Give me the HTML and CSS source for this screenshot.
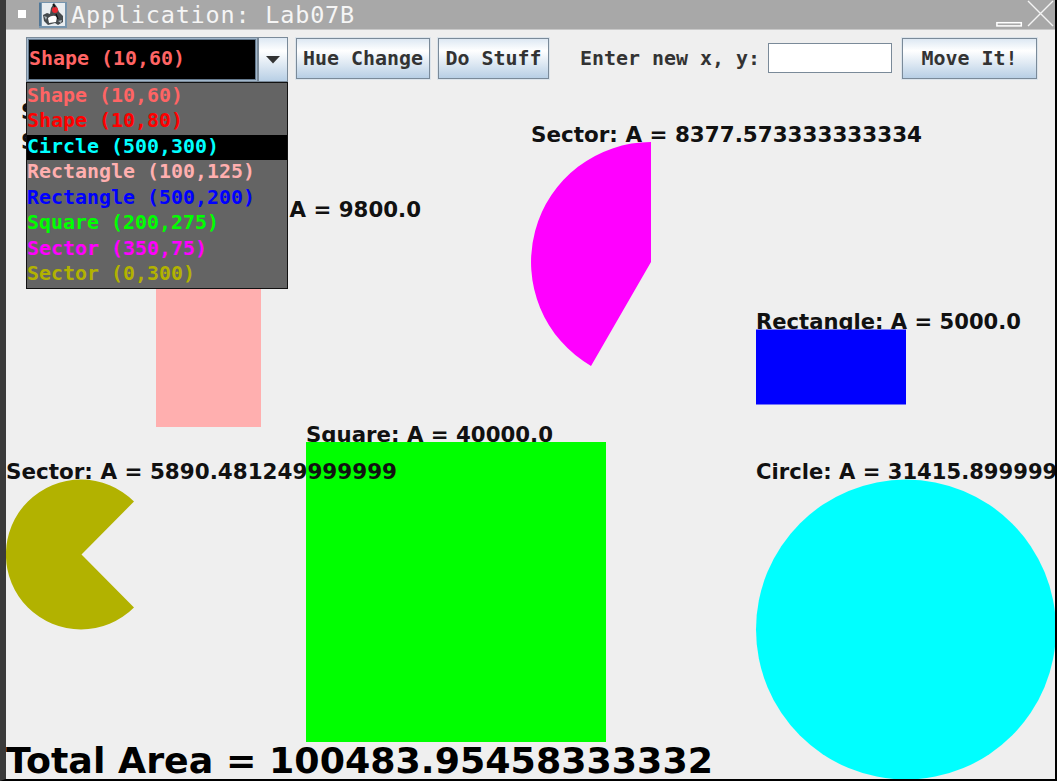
FILE: index.html
```html
<!DOCTYPE html>
<html lang="en">
<head>
<meta charset="utf-8">
<title>Application: Lab07B</title>
<link rel="stylesheet" href="styles.css">
</head>
<body>
<div class="window">
  <header class="titlebar">
    <span class="menu-dot"></span>
    <svg class="app-icon" viewBox="0 0 28 26">
      <rect width="28" height="26" fill="#7795ae"/>
      <rect x="0" y="1" width="2" height="23" fill="#527796"/>
      <rect x="3" y="1" width="23" height="23" fill="#e9edf0"/>
      <path d="M4 13l4-2 3 1 1-6 3-5 3 4 2 5 4 4 0 6-5 3-3-2-7 2-4-4z" fill="#454a4d"/>
      <path d="M9 16q5-4 9-1l-1 5-7 1z" fill="#fff"/>
      <path d="M5 14l3 1-1 3zM19 19l4-1-1 3z" fill="#aeb7bd"/>
      <circle cx="16" cy="8" r="3" fill="#e72a31"/>
      <path d="M14 2l2 3M17 12l2 5" stroke="#111" stroke-width="1.400"/>
    </svg>
    <h1 class="title">Application: Lab07B</h1>
    <svg class="window-controls" viewBox="0 0 60 29">
      <rect x=".9" y="22.700" width="24.400" height="3.200" fill="#a8a8a8" stroke="#fff" stroke-width="1.500"/>
      <path d="M32 1L57 26M57 1L32 26" stroke="#f4f4f4" stroke-width="1.400"/>
    </svg>
  </header>
  <main class="content">
    <svg class="canvas" viewBox="6 30 1049 749">
      <g class="label">
        <text x="21" y="119">S</text>
        <text x="21" y="149">S</text>
        <text x="289.500" y="216.500" textLength="131.500" lengthAdjust="spacingAndGlyphs">A = 9800.0</text>
        <text x="531" y="141.500" textLength="391" lengthAdjust="spacingAndGlyphs">Sector: A = 8377.573333333334</text>
        <text x="756" y="329" textLength="265" lengthAdjust="spacingAndGlyphs">Rectangle: A = 5000.0</text>
        <text x="306" y="441.500" textLength="247" lengthAdjust="spacingAndGlyphs">Square: A = 40000.0</text>
        <text x="756" y="479" textLength="316" lengthAdjust="spacingAndGlyphs">Circle: A = 31415.8999999</text>
      </g>
      <rect x="156" y="217" width="105" height="210" fill="#ffafaf"/>
      <path d="M651 262V142A120 120 0 0 0 591 365.900Z" fill="#f0f"/>
      <rect x="756" y="329.500" width="150" height="75" fill="#00f"/>
      <rect x="306" y="442" width="300" height="300" fill="#0f0"/>
      <path d="M81.500 554.500L134 501.500A75 75 0 1 0 134 607.500Z" fill="#b2b200"/>
      <circle cx="906" cy="629.500" r="150" fill="#0ff"/>
      <text class="label" x="6" y="479" textLength="391" lengthAdjust="spacingAndGlyphs">Sector: A = 5890.481249999999</text>
      <text class="total" x="6" y="773.300" textLength="707" lengthAdjust="spacingAndGlyphs">Total Area = 100483.95458333332</text>
    </svg>
    <div class="toolbar">
      <div class="combo">
        <div class="combo-value">Shape (10,60)</div>
        <div class="combo-arrow"><svg viewBox="0 0 14 8"><path d="M0 0H14L7 7.500Z" fill="#333"/></svg></div>
        <ul class="menu">
          <li class="salmon">Shape (10,60)</li>
          <li class="red">Shape (10,80)</li>
          <li class="cyan selected">Circle (500,300)</li>
          <li class="pink">Rectangle (100,125)</li>
          <li class="blue">Rectangle (500,200)</li>
          <li class="green">Square (200,275)</li>
          <li class="magenta">Sector (350,75)</li>
          <li class="olive">Sector (0,300)</li>
        </ul>
      </div>
      <button class="button hue">Hue Change</button>
      <button class="button stuff">Do Stuff</button>
      <label class="field-label" for="position">Enter new x, y:</label>
      <input class="field" id="position" type="text">
      <button class="button move">Move It!</button>
    </div>
  </main>
</div>
</body>
</html>
```
FILE: styles.css
```css
* { box-sizing: border-box; }
body { margin: 0; background: #000; overflow: hidden; }
.window {
  width: 1057px;
  height: 781px;
  border-left: 6px solid #3a3a3a;
  border-right: 2px solid #000;
  border-bottom: 2px solid #000;
  display: flex;
  flex-direction: column;
  background: #efefef;
  overflow: hidden;
}
.titlebar {
  height: 30px;
  flex: none;
  display: flex;
  background: #a8a8a8;
  border-bottom: 1px solid #c8c8c8;
}
.menu-dot { width: 8px; height: 8px; margin: 10px 0 0 12px; background: #fff; }
.app-icon { width: 28px; height: 26px; margin: 2px 0 0 13px; }
.title {
  margin: 0 0 0 4px;
  font: 23.5px/30px "DejaVu Sans Mono", monospace;
  letter-spacing: .8px;
  color: #f5f5f5;
}
.window-controls { width: 60px; height: 29px; margin-left: auto; margin-right: -1px; }
.content { position: relative; flex: 1; }
.canvas { position: absolute; inset: 0; width: 1049px; height: 749px; }
.label { font: bold 20.8px "DejaVu Sans", sans-serif; fill: #111; }
.total { font: bold 36px "DejaVu Sans", sans-serif; fill: #000; }
.toolbar {
  position: relative;
  display: flex;
  align-items: flex-start;
  padding: 7px 0 0 20px;
  font: bold 19.93px "DejaVu Sans Mono", monospace;
  color: #333;
  white-space: nowrap;
}
.combo {
  position: relative;
  display: flex;
  width: 262px;
  height: 45px;
  border: 1.5px solid #7a8a99;
  background: #a3b8cc;
}
.combo-value {
  flex: 1;
  margin: 1px;
  border: 1px solid #63788c;
  background: #000;
  color: #ff6464;
  line-height: 37px;
}
.combo-arrow {
  width: 30px;
  border-left: 2px solid #7a8a99;
  display: flex;
  align-items: center;
  justify-content: center;
  background: linear-gradient(#dde8f3, #fff 30%, #b8cfe5);
}
.combo-arrow svg { width: 14px; height: 8px; margin: 1px 1px 0 0; }
.menu {
  position: absolute;
  top: 44px;
  left: -1px;
  width: 262px;
  margin: 0;
  padding: .5px 0 0;
  border: 1px solid #111;
  list-style: none;
  background: #646464;
}
.menu li { height: 25.5px; line-height: 24.5px; }
.menu .selected { background: #000; }
.salmon { color: #ff6464; }
.red { color: #f00; }
.cyan { color: #0ff; }
.pink { color: #ffafaf; }
.blue { color: #00f; }
.green { color: #0f0; }
.magenta { color: #f0f; }
.olive { color: #b2b200; }
.button {
  height: 41px;
  margin: 1px 0 0 8px;
  padding: 0 0 1px;
  border: 1.5px solid #7a8a99;
  outline: 1px solid #dce4eb;
  background: linear-gradient(#dde8f3, #fff 30%, #b8cfe5);
  font: inherit;
  color: inherit;
}
.hue { width: 134px; }
.stuff { width: 111px; }
.field-label { margin-left: 31px; width: 181px; line-height: 43px; }
.field {
  width: 124px;
  height: 30px;
  margin: 6px 0 0 7px;
  border: 1.5px solid #7a8a99;
  background: #fff;
}
.move { width: 135px; margin-left: 10px; }
```
